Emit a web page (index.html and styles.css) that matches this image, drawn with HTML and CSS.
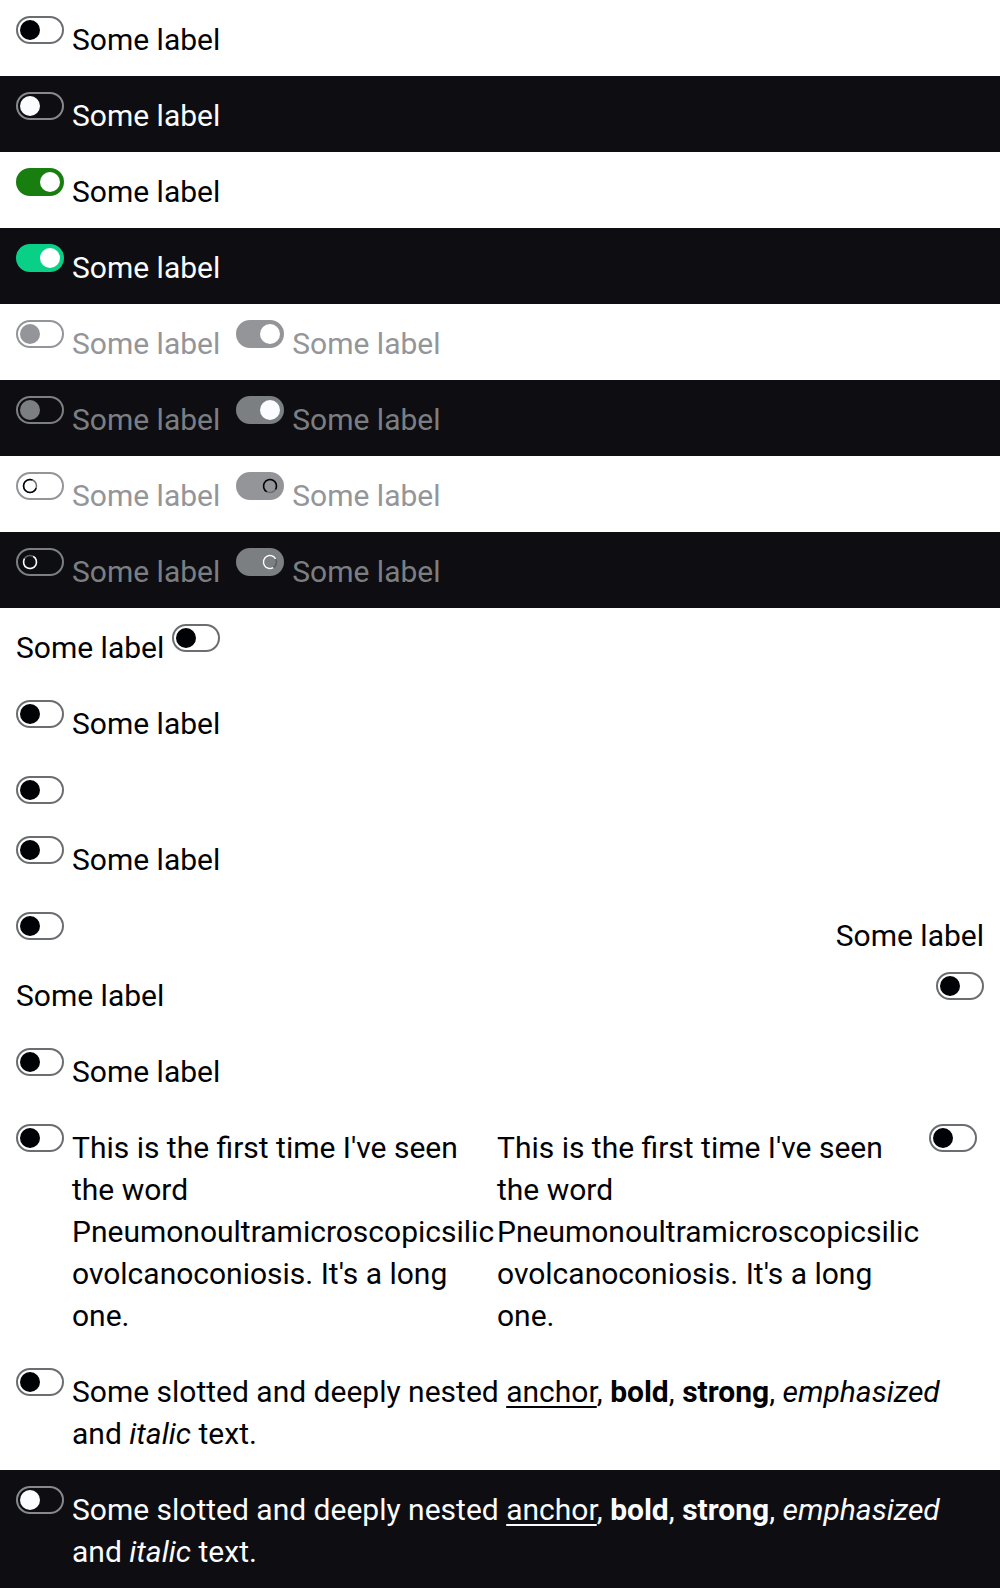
FILE: index.html
```html
<!DOCTYPE html>
<html lang="en">
<head>
<meta charset="utf-8">
<title>Switch</title>
<link rel="stylesheet" href="styles.css">
</head>
<body>

<div class="row light">
  <label class="sw"><span class="toggle"><span class="knob"></span></span><span class="lbl">Some label</span></label>
</div>
<div class="row dark">
  <label class="sw"><span class="toggle"><span class="knob"></span></span><span class="lbl">Some label</span></label>
</div>
<div class="row light">
  <label class="sw"><span class="toggle on"><span class="knob"></span></span><span class="lbl">Some label</span></label>
</div>
<div class="row dark">
  <label class="sw"><span class="toggle on"><span class="knob"></span></span><span class="lbl">Some label</span></label>
</div>

<div class="row light group">
  <label class="sw"><span class="toggle dis"><span class="knob"></span></span><span class="lbl dis">Some label</span></label>
  <label class="sw"><span class="toggle dis on"><span class="knob"></span></span><span class="lbl dis">Some label</span></label>
</div>
<div class="row dark group">
  <label class="sw"><span class="toggle dis"><span class="knob"></span></span><span class="lbl dis">Some label</span></label>
  <label class="sw"><span class="toggle dis on"><span class="knob"></span></span><span class="lbl dis">Some label</span></label>
</div>

<div class="row light group">
  <label class="sw"><span class="toggle load"><span class="knob"><svg class="spin" viewBox="0 0 20 20" width="20" height="20"><circle class="trk" cx="10" cy="10" r="6.5"/><circle class="arc" cx="10" cy="10" r="6.5" transform="rotate(20 10 10)"/></svg></span></span><span class="lbl dis">Some label</span></label>
  <label class="sw"><span class="toggle load on"><span class="knob"><svg class="spin" viewBox="0 0 20 20" width="20" height="20"><circle class="trk" cx="10" cy="10" r="6.5"/><circle class="arc" cx="10" cy="10" r="6.5" transform="rotate(120 10 10)"/></svg></span></span><span class="lbl dis">Some label</span></label>
</div>
<div class="row dark group">
  <label class="sw"><span class="toggle load"><span class="knob"><svg class="spin" viewBox="0 0 20 20" width="20" height="20"><circle class="trk" cx="10" cy="10" r="6.5"/><circle class="arc" cx="10" cy="10" r="6.5" transform="rotate(-60 10 10)"/></svg></span></span><span class="lbl dis">Some label</span></label>
  <label class="sw"><span class="toggle load on"><span class="knob"><svg class="spin" viewBox="0 0 20 20" width="20" height="20"><circle class="trk" cx="10" cy="10" r="6.5"/><circle class="arc" cx="10" cy="10" r="6.5" transform="rotate(60 10 10)"/></svg></span></span><span class="lbl dis">Some label</span></label>
</div>

<div class="row light">
  <label class="sw label-first"><span class="lbl">Some label</span><span class="toggle"><span class="knob"></span></span></label>
</div>
<div class="row light">
  <label class="sw"><span class="toggle"><span class="knob"></span></span><span class="lbl">Some label</span></label>
</div>
<div class="row light">
  <label class="sw" aria-label="Some label"><span class="toggle"><span class="knob"></span></span></label>
</div>
<div class="row light">
  <label class="sw"><span class="toggle"><span class="knob"></span></span><span class="lbl">Some label</span></label>
</div>

<div class="row light split">
  <label class="sw stack"><span class="toggle"><span class="knob"></span></span><span class="lbl">Some label</span></label>
  <label class="sw stack end"><span class="lbl">Some label</span><span class="toggle"><span class="knob"></span></span></label>
</div>

<div class="row light">
  <label class="sw"><span class="toggle"><span class="knob"></span></span><span class="lbl">Some label</span></label>
</div>

<div class="row light pair">
  <label class="sw half"><span class="toggle"><span class="knob"></span></span><span class="lbl wrap">This is the first time I've seen the word Pneumonoultramicroscopicsilicovolcanoconiosis. It's a long one.</span></label>
  <label class="sw half"><span class="lbl wrap">This is the first time I've seen the word Pneumonoultramicroscopicsilicovolcanoconiosis. It's a long one.</span><span class="toggle"><span class="knob"></span></span></label>
</div>

<div class="row light">
  <label class="sw"><span class="toggle"><span class="knob"></span></span><span class="lbl">Some slotted and deeply nested <a href="#">anchor</a>, <b>bold</b>, <strong>strong</strong>, <em>emphasized</em> and <i>italic</i> text.</span></label>
</div>
<div class="row dark">
  <label class="sw"><span class="toggle"><span class="knob"></span></span><span class="lbl">Some slotted and deeply nested <a href="#">anchor</a>, <b>bold</b>, <strong>strong</strong>, <em>emphasized</em> and <i>italic</i> text.</span></label>
</div>

</body>
</html>
```

FILE: styles.css
```css
html, body {
  margin: 0;
  padding: 0;
}

body {
  font-family: Roboto, "Noto Sans", sans-serif;
  background: #ffffff;
}

.row {
  padding: 16px;
  display: flex;
}

.light {
  background: #ffffff;
  color: #010205;
}

.dark {
  background: #0e0e12;
  color: #fbfcff;
}

.group {
  gap: 16px;
}

.sw {
  display: flex;
  align-items: flex-start;
  gap: 8px;
  cursor: pointer;
}

.label-first {
  gap: 8px;
}

.lbl {
  font-size: 30px;
  line-height: 42px;
  padding: 3px 0 0;
  margin-bottom: -1px;
  white-space: normal;
}

.lbl a {
  color: inherit;
  text-decoration: underline;
  text-underline-offset: 4px;
  text-decoration-thickness: 2px;
}

.lbl b,
.lbl strong {
  font-weight: 700;
}

.lbl em,
.lbl i {
  font-style: italic;
}

/* toggle */
.toggle {
  box-sizing: border-box;
  width: 48px;
  height: 28px;
  flex: none;
  border: 2px solid #6b6d70;
  border-radius: 14px;
  padding: 2px;
  display: flex;
  align-items: center;
  justify-content: flex-start;
  background: transparent;
}

.knob {
  width: 20px;
  height: 20px;
  flex: none;
  border-radius: 50%;
  background: #010205;
  display: flex;
}

.toggle.on {
  justify-content: flex-end;
  background: #197e10;
  border-color: #197e10;
}

.toggle.on .knob {
  background: #ffffff;
}

.toggle.dis {
  border-color: #949598;
}

.toggle.dis .knob {
  background: #949598;
}

.toggle.dis.on {
  background: #949598;
}

.toggle.dis.on .knob {
  background: #ffffff;
}

.toggle.load {
  border-color: #949598;
}

.toggle.load .knob {
  background: transparent;
}

.toggle.load.on {
  background: #949598;
  border-color: #949598;
}

.lbl.dis {
  color: #949598;
}

/* dark theme */
.dark .toggle {
  border-color: #88898c;
}

.dark .knob {
  background: #fbfcff;
}

.dark .toggle.on {
  background: #09d087;
  border-color: #09d087;
}

.dark .toggle.on .knob {
  background: #ffffff;
}

.dark .toggle.dis {
  border-color: #7c7f81;
}

.dark .toggle.dis .knob {
  background: #7c7f81;
}

.dark .toggle.dis.on {
  background: #7c7f81;
}

.dark .toggle.dis.on .knob {
  background: #fbfcff;
}

.dark .toggle.load {
  border-color: #7c7f81;
}

.dark .toggle.load .knob {
  background: transparent;
}

.dark .toggle.load.on {
  background: #7c7f81;
}

.dark .lbl.dis {
  color: #7c7f81;
}

/* spinner */
.spin circle {
  fill: none;
  stroke-width: 1.5;
}

.spin .trk {
  stroke: #6b6d70;
}

.spin .arc {
  stroke: #010205;
  stroke-dasharray: 30 41;
}

.dark .spin .trk {
  stroke: #5c5e61;
}

.dark .spin .arc {
  stroke: #fbfcff;
}

/* special layouts */
.split {
  justify-content: space-between;
}

.stack {
  flex-direction: column;
  gap: 32px;
}

.stack.end {
  align-items: flex-end;
  gap: 16px;
}

.pair {
  gap: 1px;
}

.half {
  width: 480px;
}

.wrap {
  flex: 1 1 auto;
  min-width: 0;
  overflow-wrap: break-word;
}
```
